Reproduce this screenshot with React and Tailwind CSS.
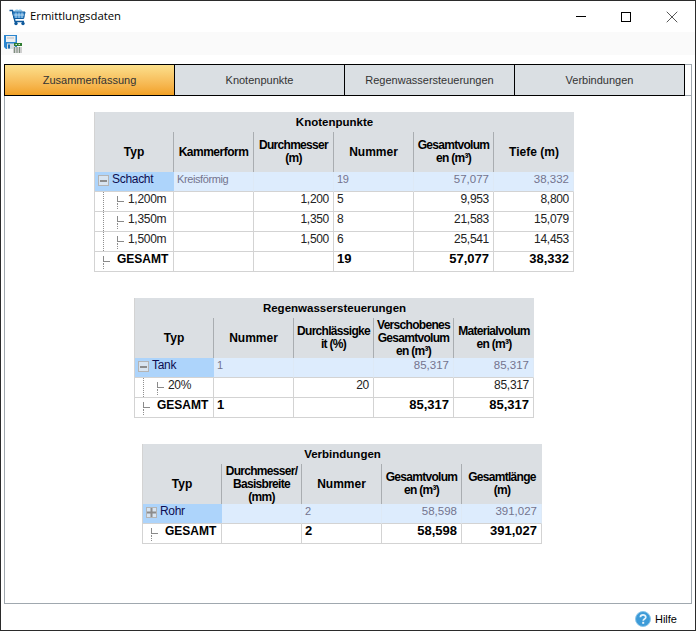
import { X } from "lucide-react";

const tabs = ["Zusammenfassung", "Knotenpunkte", "Regenwassersteuerungen", "Verbindungen"];

const knoten = {
  title: "Knotenpunkte",
  offset: "ml-[89px]",
  headers: ["Typ", "Kammerform", "Durchmesser\n(m)", "Nummer", "Gesamtvolum\nen (m³)", "Tiefe (m)"],
  group: { label: "Schacht", icon: "minus", cells: [["Kreisförmig", "l"], ["", "r"], ["19", "l"], ["57,077", "r"], ["38,332", "r"]] },
  rows: [
    { label: "1,200m", cells: [["", "l"], ["1,200", "r"], ["5", "l"], ["9,953", "r"], ["8,800", "r"]] },
    { label: "1,350m", cells: [["", "l"], ["1,350", "r"], ["8", "l"], ["21,583", "r"], ["15,079", "r"]] },
    { label: "1,500m", cells: [["", "l"], ["1,500", "r"], ["6", "l"], ["25,541", "r"], ["14,453", "r"]] },
  ],
  total: [["", "l"], ["", "r"], ["19", "l"], ["57,077", "r"], ["38,332", "r"]],
};

const regen = {
  title: "Regenwassersteuerungen",
  offset: "ml-[129px]",
  headers: ["Typ", "Nummer", "Durchlässigke\nit (%)", "Verschobenes\nGesamtvolum\nen (m³)", "Materialvolum\nen (m³)"],
  group: { label: "Tank", icon: "minus", cells: [["1", "l"], ["", "r"], ["85,317", "r"], ["85,317", "r"]] },
  rows: [{ label: "20%", cells: [["", "l"], ["20", "r"], ["", "r"], ["85,317", "r"]] }],
  total: [["1", "l"], ["", "r"], ["85,317", "r"], ["85,317", "r"]],
};

const verb = {
  title: "Verbindungen",
  offset: "ml-[137px]",
  headers: ["Typ", "Durchmesser/\nBasisbreite\n(mm)", "Nummer", "Gesamtvolum\nen (m³)", "Gesamtlänge\n(m)"],
  group: { label: "Rohr", icon: "plus", cells: [["", "l"], ["2", "l"], ["58,598", "r"], ["391,027", "r"]] },
  rows: [],
  total: [["", "l"], ["2", "l"], ["58,598", "r"], ["391,027", "r"]],
};

function CartIcon() {
  return (
    <svg width="18" height="18" viewBox="0 0 18 18" fill="none">
      <path d="M5 3.500c1-2 3-2.500 4.500-1.500 1.500-1 3.500-.5 4 1.500z" fill="#8cc8ee" />
      <path d="M0.500 2.500h3l2.500 11h9" stroke="#0f5a9c" strokeWidth="1.400" />
      <path d="M3.500 4h12.500l-1.300 6.500H5z" fill="#3e8fd0" stroke="#0f5a9c" />
      <path d="M7 4.500v5.500M10 4.500v5.500M13 4.500v5.500M4.500 7h11" stroke="#cfe6f6" strokeWidth="0.800" />
      <circle cx="7" cy="15.500" r="1.700" fill="#0f5a9c" />
      <circle cx="14" cy="15.500" r="1.700" fill="#0f5a9c" />
    </svg>
  );
}

function SaveIcon() {
  return (
    <svg width="18" height="18" viewBox="0 0 18 18" fill="none">
      <path d="M0 0h13v14H2l-2-2z" fill="#2c86cf" />
      <rect x="2" y="1" width="9.500" height="6" fill="#eef0f2" />
      <rect x="3" y="2.500" width="7" height="1" fill="#b8bcc0" />
      <rect x="3" y="8.500" width="8" height="5.500" fill="#d5dde3" />
      <rect x="4" y="9.500" width="2" height="4" fill="#1d6cae" />
      <rect x="10" y="8" width="8" height="3" fill="#2f7d32" />
      <rect x="11.500" y="9" width="1.500" height="1" fill="#d6ecd6" />
      <rect x="14.500" y="9" width="1.500" height="1" fill="#d6ecd6" />
      <rect x="9" y="12" width="9" height="6" fill="#cfcfcf" />
      <path d="M10.500 12v6M13 12v6M15.500 12v6" stroke="#7f8f7f" strokeWidth="1" />
    </svg>
  );
}

function HelpIcon() {
  return (
    <svg width="16" height="16" viewBox="0 0 16 16">
      <circle cx="8" cy="8" r="7.500" fill="#3d9bd8" stroke="#8cc6ea" />
      <path d="M5.400 6.200c0-3.200 5.400-3.200 5.400 0 0 1.800-2.600 1.800-2.600 3.600" fill="none" stroke="#e6f3fb" strokeWidth="1.700" />
      <rect x="7.200" y="10.800" width="2" height="2" fill="#e6f3fb" />
    </svg>
  );
}

function Expander({ kind }) {
  return (
    <span className="flex h-[11px] w-[11px] shrink-0 items-center justify-center border border-[#b4b4b4] bg-[#d8e4f0]">
      {kind === "plus" ? (
        <svg width="9" height="9" viewBox="0 0 9 9">
          <path d="M0 3.500h9v2H0zM3.500 0h2v9h-2z" fill="#8c8c8c" />
        </svg>
      ) : (
        <span className="h-[2px] w-[7px] bg-[#8c8c8c]" />
      )}
    </span>
  );
}

// dotted tree connector in front of a child row
function TreeLine({ guide }) {
  return (
    <span className="flex shrink-0 items-start">
      {guide && <span className="ml-[5px] mr-[13px] h-[19px] border-l border-dotted border-[#8f8f8f]" />}
      <span className="relative h-[19px] w-[8px]">
        <span className="absolute left-0 top-[4px] h-[6px] border-l border-[#8a8a8a]" />
        <span className="absolute left-0 top-[9px] w-[7px] border-t border-[#8a8a8a]" />
        <span className="absolute left-0 top-[11px] h-[6px] border-l border-dotted border-[#8f8f8f]" />
      </span>
    </span>
  );
}

function Grid({ data }) {
  const cellBase = "flex h-5 min-w-0 border-b border-r border-[#d3d3d3]";
  const colWidth = (i) => (i === 0 ? "w-[79px]" : "w-20");
  return (
    <div className={`${data.offset} w-fit border-l border-[#d3d3d3] text-[11px] text-[#333]`}>
      <div className="flex h-5 items-center justify-center bg-[#dbdfe3] pt-px text-[11.500px] font-bold text-black">{data.title}</div>
      <div className="flex">
        {data.headers.map((h, i) => (
          <div
            key={h}
            className={`flex h-10 ${colWidth(i)} items-center justify-center whitespace-pre-line bg-[#dbdfe3] text-center text-[12px] font-bold leading-[13px] text-black ${i < data.headers.length - 1 ? "border-r border-[#a9adb1]" : ""} ${h.includes("\n") ? "tracking-[-0.7px]" : h === "Kammerform" ? "tracking-[-0.5px]" : ""}`}
          >
            {h}
          </div>
        ))}
      </div>
      <div className="flex">
        <div className="flex h-5 w-[79px] items-start gap-[3px] border-b border-[#d3d3d3] bg-[#add4fb] pl-[3px] text-[#0d0d50]">
          <span className="mt-[3px]"><Expander kind={data.group.icon} /></span>
          <span className="text-[12px] leading-[14px] tracking-[-0.3px]">{data.group.label}</span>
        </div>
        {data.group.cells.map(([v, a], i) => (
          <div key={i} className={`${cellBase} w-20 border-r-[#dde9f6] bg-[#ddecfd] leading-[15px] text-[#74748e] ${a === "r" ? "justify-end pr-[4px] text-[11.500px]" : "pl-[3px] tracking-[-0.4px]"}`}>
            {v}
          </div>
        ))}
      </div>
      {data.rows.map((r) => (
        <div key={r.label} className="flex">
          <div className={`${cellBase} w-[79px] pl-[3px] leading-[15px] text-[#222]`}>
            <TreeLine guide />
            <span className="ml-[3px] text-[12px] tracking-[-0.3px]">{r.label}</span>
          </div>
          {r.cells.map(([v, a], i) => (
            <div key={i} className={`${cellBase} w-20 text-[12px] leading-[15px] tracking-[-0.3px] text-[#222] ${a === "r" ? "justify-end pr-[4px]" : "pl-[3px]"}`}>
              {v}
            </div>
          ))}
        </div>
      ))}
      <div className="flex">
        <div className={`${cellBase} w-[79px] pl-[8px] font-bold leading-[15px] text-black`}>
          <TreeLine />
          <span className="ml-[6px] text-[12px]">GESAMT</span>
        </div>
        {data.total.map(([v, a], i) => (
          <div key={i} className={`${cellBase} w-20 text-[13px] font-bold leading-[13px] text-black ${a === "r" ? "justify-end pr-[4px]" : "pl-[3px]"}`}>
            {v}
          </div>
        ))}
      </div>
    </div>
  );
}

export default function App() {
  return (
    <div className="flex h-[631px] w-[696px] flex-col border border-[#2b2b2b] bg-white font-['Liberation_Sans',sans-serif] text-[11px] text-black">
      {/* Title bar */}
      <div className="flex h-[31px] shrink-0 items-center">
        <span className="ml-[8px] mt-[1px]"><CartIcon /></span>
        <span className="ml-[3px] font-['Open_Sans',sans-serif] text-[11.300px]">Ermittlungsdaten</span>
        <div className="ml-auto flex items-center">
          <span className="mr-[35px] h-px w-[10px] bg-black" />
          <span className="mr-[31px] h-[10px] w-[10px] border border-black" />
          <X size={20} strokeWidth={0.8} className="mr-[13px]" />
        </div>
      </div>

      {/* Toolbar */}
      <div className="flex h-[23px] shrink-0 items-center bg-[#fafafa] pl-[3px]">
        <SaveIcon />
      </div>

      {/* Tabs */}
      <div className="mt-[9px] px-[3px]">
        <div className="flex h-[540px] flex-col border-b border-l border-r border-[#a0a8af]">
          <div className="flex h-[32px] shrink-0 border-b border-t border-[#a0a8af]">
            <div className="-mb-px -ml-px -mt-px flex w-[681px] border border-black">
              {tabs.map((t, i) => (
                <div
                  key={t}
                  className={`flex flex-1 items-center justify-center ${i > 0 ? "border-l border-black bg-[#dadfe3] text-[#333]" : "bg-gradient-to-b from-[#fbe08c] to-[#f2a122] text-[#333]"}`}
                >
                  {t}
                </div>
              ))}
            </div>
          </div>
          <div className="flex flex-col pt-[16px]">
            <Grid data={knoten} />
            <div className="h-[26px]" />
            <Grid data={regen} />
            <div className="h-[26px]" />
            <Grid data={verb} />
          </div>
        </div>
      </div>

      {/* Footer */}
      <div className="flex flex-1 items-center justify-end gap-[4px] pr-[18px] pt-[4px]">
        <HelpIcon />
        <span>Hilfe</span>
      </div>
    </div>
  );
}
